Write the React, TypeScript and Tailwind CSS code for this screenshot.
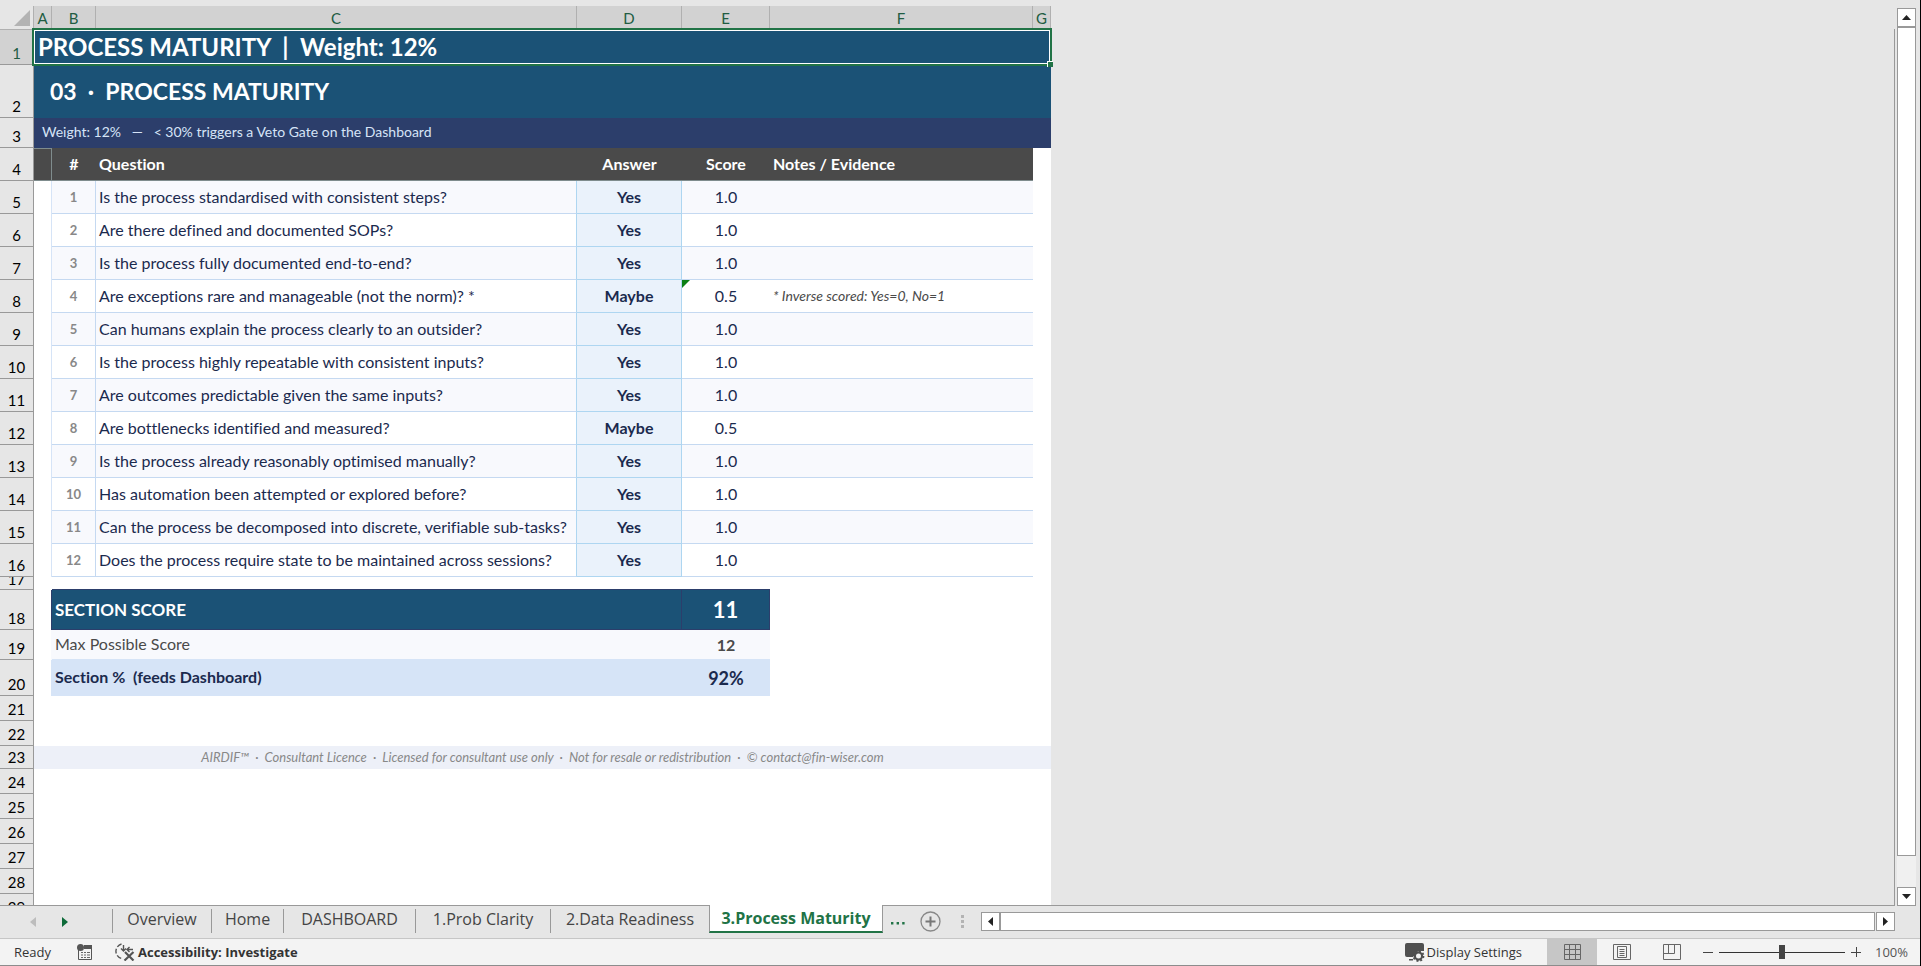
import React from "react";

const questions: [string, string, string, string?][] = [
  ["Is the process standardised with consistent steps?", "Yes", "1.0"],
  ["Are there defined and documented SOPs?", "Yes", "1.0"],
  ["Is the process fully documented end-to-end?", "Yes", "1.0"],
  ["Are exceptions rare and manageable (not the norm)? *", "Maybe", "0.5", "* Inverse scored: Yes=0, No=1"],
  ["Can humans explain the process clearly to an outsider?", "Yes", "1.0"],
  ["Is the process highly repeatable with consistent inputs?", "Yes", "1.0"],
  ["Are outcomes predictable given the same inputs?", "Yes", "1.0"],
  ["Are bottlenecks identified and measured?", "Maybe", "0.5"],
  ["Is the process already reasonably optimised manually?", "Yes", "1.0"],
  ["Has automation been attempted or explored before?", "Yes", "1.0"],
  ["Can the process be decomposed into discrete, verifiable sub-tasks?", "Yes", "1.0"],
  ["Does the process require state to be maintained across sessions?", "Yes", "1.0"],
];

const columns = ["A", "B", "C", "D", "E", "F", "G"];

function RowHead({ n, active }: { n: number; active?: boolean }) {
  return (
    <th
      scope="row"
      className={
        "h-full border-r border-b border-[#999999] px-0 pt-0 pb-px align-bottom text-[15px] leading-5 font-normal " +
        (active ? "bg-[#d2d2d2] text-[#215c42]" : "bg-[#e6e6e6] text-black")
      }
    >
      {n}
    </th>
  );
}

function EmptyRow({ n }: { n: number }) {
  return (
    <tr className="h-[25px]">
      <RowHead n={n} />
      <td colSpan={7} />
    </tr>
  );
}

function Sheet() {
  return (
    <table className="w-[1051px] table-fixed border-separate border-spacing-0 bg-white text-[#1b2a4e]">
      <colgroup>
        <col className="w-[34px]" />
        <col className="w-[18px]" />
        <col className="w-[44px]" />
        <col className="w-[481px]" />
        <col className="w-[105px]" />
        <col className="w-[88px]" />
        <col className="w-[263px]" />
        <col className="w-[18px]" />
      </colgroup>
      <thead>
        <tr className="h-6">
          <th className="border-r border-b border-[#b0b0b0] bg-[#e6e6e6] p-0" aria-label="Select all">
            <svg width="16" height="16" viewBox="0 0 16 16" className="mr-[3px] ml-auto">
              <path d="M16 0V16H0Z" fill="#b3b3b3" />
            </svg>
          </th>
          {columns.map((c) => (
            <th
              key={c}
              scope="col"
              className="border-r border-b border-[#b0b0b0] bg-[#d2d2d2] p-0 text-[15px] leading-5 font-normal text-[#215c42]"
            >
              {c}
            </th>
          ))}
        </tr>
      </thead>
      <tbody>
        <tr className="h-[35px]">
          <RowHead n={1} active />
          <td colSpan={7} className="relative bg-[#1b5276] px-1 pt-0 pb-[2px] text-2xl leading-8 font-bold whitespace-pre text-white">
            PROCESS MATURITY  |  Weight: 12%
            <span className="absolute -top-[2px] -right-px -bottom-px -left-[2px] border-2 border-[#217346]">
              <span className="absolute inset-0 border border-white" />
              <span className="absolute -right-[3px] -bottom-[3px] size-[6px] border-t border-l border-white bg-[#217346]" />
            </span>
          </td>
        </tr>
        <tr className="h-[53px]">
          <RowHead n={2} />
          <td colSpan={7} className="bg-[#1b5276] px-4 pt-0 pb-[2px] text-[23px] leading-8 font-bold whitespace-pre text-white">
            03  ·  PROCESS MATURITY
          </td>
        </tr>
        <tr className="h-[30px]">
          <RowHead n={3} />
          <td colSpan={7} className="bg-[#2c3e6b] px-2 pt-0 pb-[2px] text-sm leading-5 whitespace-pre text-[#d6e4f7]">
            Weight: 12%   —   &lt; 30% triggers a Veto Gate on the Dashboard
          </td>
        </tr>
        <tr className="h-[33px] bg-[#4a4a4a] text-base leading-6 text-white">
          <RowHead n={4} />
          <td className="border-t border-r border-b border-[#7f8c8d] p-0" />
          <th scope="col" className="border-b border-[#7f8c8d] p-0">#</th>
          <th scope="col" className="border-b border-[#7f8c8d] px-[3px] py-0 text-left">Question</th>
          <th scope="col" className="border-b border-[#7f8c8d] p-0">Answer</th>
          <th scope="col" className="border-b border-[#7f8c8d] p-0">Score</th>
          <th scope="col" className="border-b border-[#7f8c8d] px-[3px] py-0 text-left">Notes / Evidence</th>
          <td className="bg-white p-0" />
        </tr>
        {questions.map(([question, answer, score, note], i) => (
          <tr key={question} className={"h-[33px] text-base leading-6 " + (i % 2 ? "bg-white" : "bg-[#f8f9fd]")}>
            <RowHead n={i + 5} />
            <td className="border-r border-[#d6e4f7] bg-white p-0" />
            <td className="border-r border-b border-[#c5d9f1] p-0 text-center text-[13px] leading-5 font-bold text-[#888888]">{i + 1}</td>
            <td className="border-r border-b border-[#c5d9f1] border-r-[#aed6f1] px-[3px] py-0 whitespace-nowrap">{question}</td>
            <td className="border-r border-b border-[#aed6f1] bg-[#eaf2fb] p-0 text-center font-bold">{answer}</td>
            <td className="relative border-b border-[#c5d9f1] p-0 text-center">
              {score}
              {note && (
                <svg className="absolute top-0 left-0" width="8" height="8" viewBox="0 0 8 8">
                  <path d="M0 0H8L0 8Z" fill="#0b8015" />
                </svg>
              )}
            </td>
            <td className="border-b border-[#c5d9f1] px-[3px] py-0 text-sm text-[#4a4a4a] italic">{note}</td>
            <td className="bg-white p-0" />
          </tr>
        ))}
        <tr className="h-[13px]">
          <th scope="row" className="border-r border-b border-[#999999] bg-[#e6e6e6] p-0 text-[15px] font-normal text-black">
            <span className="flex h-3 items-end justify-center overflow-hidden leading-5">17</span>
          </th>
          <td className="p-0" />
          <td colSpan={4} className="border-b border-[#2c3e6b] p-0" />
          <td colSpan={2} className="p-0" />
        </tr>
        <tr className="h-10 font-bold text-white">
          <RowHead n={18} />
          <td className="border-r border-[#2c3e6b] p-0" />
          <td colSpan={3} className="border-r border-b border-[#2c3e6b] bg-[#1b5276] px-[3px] py-0 text-[17px] leading-6">SECTION SCORE</td>
          <td className="border-r border-b border-[#2c3e6b] bg-[#1b5276] p-0 text-center text-[22px] leading-7">11</td>
          <td colSpan={2} className="p-0" />
        </tr>
        <tr className="h-[30px] text-base leading-6 text-[#4a4a4a]">
          <RowHead n={19} />
          <td className="border-r border-[#f8f9fd] p-0" />
          <td colSpan={3} className="border-b border-[#d6e4f7] bg-[#f8f9fd] px-[3px] pt-0 pb-[2px]">Max Possible Score</td>
          <td className="border-b border-[#d6e4f7] bg-[#f8f9fd] p-0 text-center font-bold">12</td>
          <td colSpan={2} className="p-0" />
        </tr>
        <tr className="h-9 font-bold">
          <RowHead n={20} />
          <td className="border-r border-[#d6e4f7] p-0" />
          <td colSpan={3} className="bg-[#d6e4f7] px-[3px] pt-0 pb-[2px] text-base leading-6 whitespace-pre">Section %  (feeds Dashboard)</td>
          <td className="bg-[#d6e4f7] p-0 text-center text-lg leading-6">92%</td>
          <td colSpan={2} className="p-0" />
        </tr>
        <EmptyRow n={21} />
        <EmptyRow n={22} />
        <tr className="h-[23px]">
          <RowHead n={23} />
          <td colSpan={7} className="bg-[#edf0f8] px-0 pt-0 pb-[2px] text-center text-[13px] leading-5 whitespace-pre text-[#888888] italic">
            AIRDIF™  ·  Consultant Licence  ·  Licensed for consultant use only  ·  Not for resale or redistribution  ·  © contact@fin-wiser.com
          </td>
        </tr>
        {[24, 25, 26, 27, 28, 29].map((n) => (
          <EmptyRow key={n} n={n} />
        ))}
      </tbody>
    </table>
  );
}

function ArrowButton({ label, d }: { label: string; d: string }) {
  return (
    <button aria-label={label} className="flex size-[19px] shrink-0 items-center justify-center border border-[#999999] bg-white">
      <svg width="9" height="9" viewBox="0 0 9 9">
        <path d={d} fill="#222222" />
      </svg>
    </button>
  );
}

const tabs: [string, string][] = [
  ["Overview", "w-[99px]"],
  ["Home", "w-[72px]"],
  ["DASHBOARD", "w-[132px]"],
  ["1.Prob Clarity", "w-[135px]"],
  ["2.Data Readiness", "w-[159px]"],
];

function TabBar() {
  return (
    <div className="flex h-8 shrink-0 items-start bg-[#e6e6e6] pr-[25px]">
      <div className="-mt-px flex h-8 w-[112px] shrink-0 items-center gap-[26px] border-t border-[#999999] pl-[30px]">
        <button aria-label="Previous sheets">
          <svg width="6" height="10" viewBox="0 0 6 10"><path d="M6 0V10L0 5Z" fill="#bdbdbd" /></svg>
        </button>
        <button aria-label="Next sheets">
          <svg width="6" height="10" viewBox="0 0 6 10"><path d="M0 0V10L6 5Z" fill="#0e6b3a" /></svg>
        </button>
      </div>
      <nav className="-mt-px flex shrink-0 text-base leading-6 text-[#444444]">
        {tabs.map(([name, width]) => (
          <button key={name} className={"flex h-7 items-end border-t border-[#999999] " + width}>
            <span className="flex h-6 w-full items-center justify-center border-l border-[#999999] pb-1">{name}</span>
          </button>
        ))}
        <button className="h-7 w-[174px] border-x border-b-2 border-x-[#999999] border-b-[#217346] bg-white pb-px font-bold text-[#217346]">
          3.Process Maturity
        </button>
      </nav>
      <div className="-mt-px flex h-8 min-w-0 flex-1 items-center border-t border-[#999999]">
        <button aria-label="More sheets" className="ml-2 pt-1">
          <svg width="14" height="3" viewBox="0 0 14 3"><path d="M0 0h2.400v2.400H0zM5.600 0H8v2.400H5.600zM11.200 0h2.400v2.400h-2.400z" fill="#217346" /></svg>
        </button>
        <button aria-label="New sheet" className="ml-[15px]">
          <svg width="21" height="21" viewBox="0 0 21 21" fill="none">
            <circle cx="10.500" cy="10.500" r="9.500" stroke="#888888" strokeWidth="1.300" />
            <path d="M10.500 5.500v10M5.500 10.500h10" stroke="#777777" strokeWidth="2" />
          </svg>
        </button>
        <svg width="3" height="13" viewBox="0 0 3 13" className="mr-[17px] ml-5">
          <path d="M0 0h3v3H0zM0 5h3v3H0zM0 10h3v3H0z" fill="#b3b3b3" />
        </svg>
        <ArrowButton label="Scroll left" d="M7 0V9L2 4.500Z" />
        <div className="h-[19px] min-w-0 flex-1 border border-[#999999] bg-white" />
        <div className="ml-px"><ArrowButton label="Scroll right" d="M2 0V9L7 4.500Z" /></div>
      </div>
    </div>
  );
}

function StatusBar() {
  return (
    <footer className="flex h-7 shrink-0 items-center border-t border-b border-t-[#c6c6c6] border-b-[#8c8c8c] bg-[#f3f3f3] text-[13px] leading-5 text-[#333333]">
      <span className="w-[77px] pl-[14px]">Ready</span>
      <button aria-label="Macro recording" className="w-[38px]">
        <svg width="16" height="16" viewBox="0 0 16 16" fill="none">
          <path d="M1.500 6v9.500h13V2H7" stroke="#555" />
          <path d="M7 1h8v4H7z" fill="#555" />
          <circle cx="3.500" cy="3.500" r="3.500" fill="#555" />
          <path d="M4 8.500h2M7 8.500h2M10 8.500h3M4 11h2M7 11h2M10 11h3M4 13.500h2M7 13.500h2M10 13.500h3" stroke="#666" />
        </svg>
      </button>
      <button className="flex items-center gap-[3px] font-bold">
        <svg width="20" height="18" viewBox="0 0 20 18" fill="none" stroke="#555">
          <path d="M6.500 1A7.500 7.500 0 0 0 6.500 15.500" strokeWidth="1.400" strokeDasharray="5 2" />
          <path d="M8.500 2v5.500M6 5.500l2.500 2.500 2.500-2.500M18 6.500h-6M14.500 4l-2.500 2.500 2.500 2.500" strokeWidth="1.400" />
          <path d="M10 9l8.500 8.500M18.500 9l-9 8.500" strokeWidth="2.200" />
        </svg>
        Accessibility: Investigate
      </button>
      <div className="ml-auto flex h-full items-center">
        <button className="mr-[25px] flex items-center gap-[2px]">
          <svg width="20" height="19" viewBox="0 0 20 19">
            <path d="M2 0h15a2 2 0 0 1 2 2v6h-6l-5 6H2a2 2 0 0 1-2-2V2a2 2 0 0 1 2-2zM4 16h4v1.500H4z" fill="#505050" />
            <circle cx="13.500" cy="13" r="3.600" fill="none" stroke="#505050" strokeWidth="2.200" />
            <circle cx="13.500" cy="13" r="5" fill="none" stroke="#505050" strokeWidth="1.800" strokeDasharray="2 1.900" />
          </svg>
          Display Settings
        </button>
        <button aria-label="Normal view" className="flex h-full w-[50px] items-center justify-center bg-[#c6c6c6]">
          <svg width="17" height="16" viewBox="0 0 17 16" fill="none" stroke="#666">
            <path d="M.5.500h16v15H.5zM5.500 0v16M11.500 0v16M0 5.500h17M0 10.500h17" />
          </svg>
        </button>
        <button aria-label="Page layout view" className="flex h-full w-[50px] items-center justify-center">
          <svg width="18" height="16" viewBox="0 0 18 16" fill="none" stroke="#666">
            <path d="M.5.500h17v15H.5zM4.500 2.500h9v11h-9zM6.500 5.500h5M6.500 7.500h5M6.500 9.500h5M6.500 11.500h5" />
          </svg>
        </button>
        <button aria-label="Page break preview" className="flex h-full w-[50px] items-center justify-center">
          <svg width="18" height="16" viewBox="0 0 18 16" fill="none" stroke="#666">
            <path d="M.5.500h17v15H.5zM.5 9.500h11V.5M5.500.500v9" />
          </svg>
        </button>
        <button aria-label="Zoom out" className="ml-[6px]">
          <svg width="10" height="10" viewBox="0 0 10 10"><path d="M0 5.500h10" stroke="#444" /></svg>
        </button>
        <input
          type="range"
          aria-label="Zoom"
          min={0}
          max={200}
          defaultValue={100}
          className="mx-[6px] h-4 w-[126px] appearance-none bg-[linear-gradient(#333,#333)] bg-[length:100%_1px] bg-center bg-no-repeat [&::-webkit-slider-thumb]:h-[14px] [&::-webkit-slider-thumb]:w-[6px] [&::-webkit-slider-thumb]:appearance-none [&::-webkit-slider-thumb]:bg-[#444444]"
        />
        <button aria-label="Zoom in">
          <svg width="10" height="10" viewBox="0 0 10 10"><path d="M0 5.500h10M5.500 0v10" stroke="#444" /></svg>
        </button>
        <span className="w-[59px] pr-3 text-right text-[#555555]">100%</span>
      </div>
    </footer>
  );
}

export default function App() {
  return (
    <div className="flex h-screen flex-col overflow-hidden border-r border-black bg-[#e6e6e6] font-['Open_Sans',sans-serif]">
      <main className="flex min-h-0 flex-1">
        <div className="min-w-0 flex-1 overflow-hidden border-b border-[#999999] pt-[6px] font-['Lato',sans-serif] [font-variant-ligatures:none]">
          <Sheet />
        </div>
        <div className="mt-[29px] w-px bg-[#999999]" />
        <div className="mr-1 ml-[2px] flex w-[19px] flex-col pt-2">
          <ArrowButton label="Scroll up" d="M0 7H9L4.500 2Z" />
          <div className="flex-1 border border-[#999999] bg-white" />
          <div className="h-[31px] bg-[#f0f0f0]" />
          <ArrowButton label="Scroll down" d="M0 2H9L4.500 7Z" />
        </div>
      </main>
      <TabBar />
      <StatusBar />
    </div>
  );
}
